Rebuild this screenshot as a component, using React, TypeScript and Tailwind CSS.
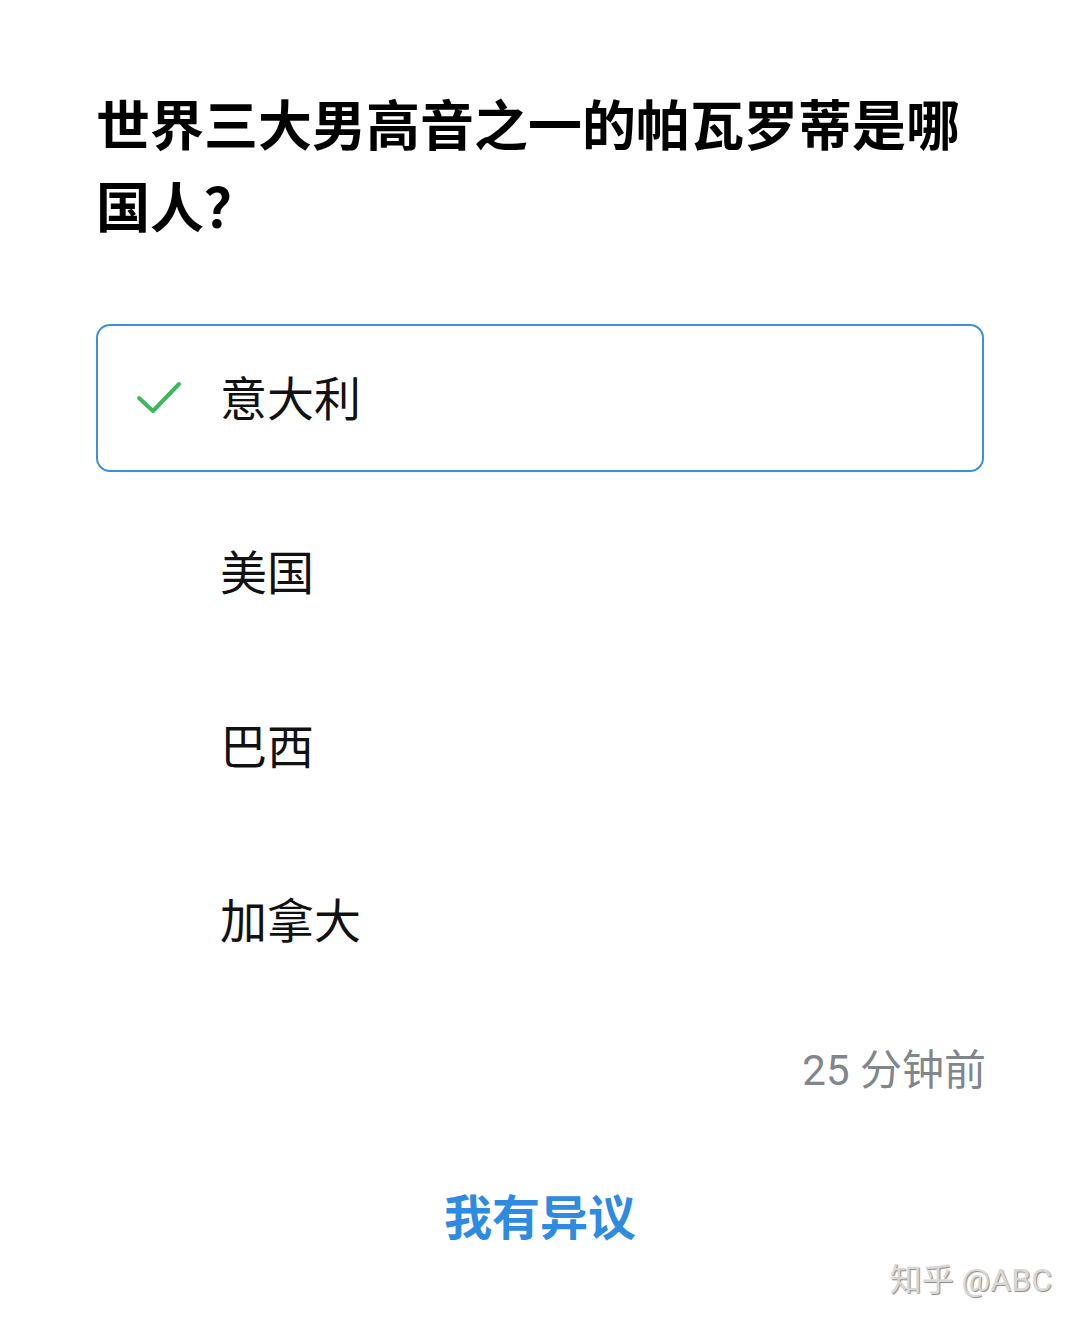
import React from "react";

const font = { fontFamily: '"Noto Sans CJK SC", "Noto Sans", sans-serif' };

export default function App() {
  const options = ["美国", "巴西", "加拿大"];
  return (
    <div className="w-[1080px] h-[1328px] bg-white relative overflow-hidden" style={font}>
      <div className="px-[96px] pt-[82px]">
        <h1 className="text-[54px] leading-[82px] font-bold text-black tracking-[0px]">
          世界三大男高音之一的帕瓦罗蒂是哪国人？
        </h1>
        <div className="mt-[78px] flex flex-col gap-[26px]">
          <div className="h-[148px] rounded-[14px] border-[2.5px] border-[#3b8fdc] flex items-center pb-[6px]">
            <svg className="ml-[38px] mt-[6px] w-[46px] h-[34px]" viewBox="0 0 46 34" fill="none">
              <path d="M3 17 L17 30 L43 3" stroke="#3cb95a" strokeWidth="4" strokeLinecap="round" strokeLinejoin="round" />
            </svg>
            <span className="ml-[38px] text-[47px] text-[#111] leading-none">意大利</span>
          </div>
          {options.map((o) => (
            <div key={o} className="h-[148px] flex items-center pb-[6px]">
              <span className="ml-[124px] text-[47px] text-[#111] leading-none">{o}</span>
            </div>
          ))}
        </div>
        <div className="mt-[56px] flex justify-end">
          <span
            className="text-[42px] text-[#80868c] leading-none mr-[-2px]"
            style={{ fontFamily: 'Roboto, "Noto Sans CJK SC", sans-serif' }}
          >
            25 分钟前
          </span>
        </div>
        <div className="mt-[98px] flex justify-center">
          <span className="text-[48px] font-bold text-[#2f8be0] leading-none">我有异议</span>
        </div>
      </div>
      <div
        className="absolute right-[28px] top-[1264px] text-[32px] leading-none text-[#d8d8d8]"
        style={{ fontFamily: 'Roboto, "Noto Sans CJK SC", sans-serif', textShadow: "1px 1px 1px #8a8a8a" }}
      >
        知乎 @ABC
      </div>
    </div>
  );
}
